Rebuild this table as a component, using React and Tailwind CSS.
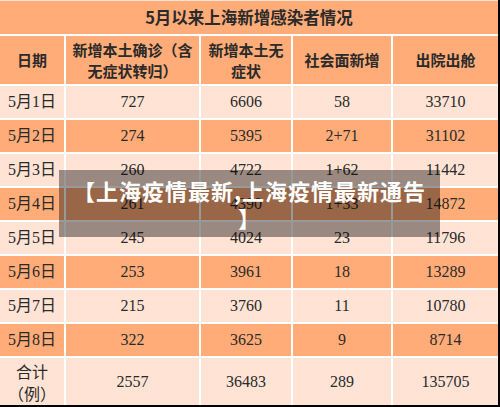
import React from 'react';

const rows = [
  ['5月1日', '727', '6606', '58', '33710'],
  ['5月2日', '274', '5395', '2+71', '31102'],
  ['5月3日', '260', '4722', '1+62', '11442'],
  ['5月4日', '261', '4390', '1+33', '14872'],
  ['5月5日', '245', '4024', '23', '11796'],
  ['5月6日', '253', '3961', '18', '13289'],
  ['5月7日', '215', '3760', '11', '10780'],
  ['5月8日', '322', '3625', '9', '8714'],
];

const sans = "font-['Noto_Sans_CJK_SC',sans-serif]";
const serif = "font-['Liberation_Serif','Noto_Sans_CJK_SC',serif]";

const App = () => {
  return (
    <div className="relative w-[500px] h-[407px] bg-black overflow-hidden">
      <div className="w-[498px] h-[1px] bg-[#ffe4d5]" />
      <div className="grid w-[498px] grid-cols-[64px_133px_90px_98px_105px] gap-[2px] bg-white text-[#2a2a2a]">
        {/* title */}
        <div className={`col-span-5 h-[33px] bg-[#ffac78] flex items-center justify-center text-[16.5px] font-bold ${sans}`}>
          5月以来上海新增感染者情况
        </div>

        {/* header */}
        <div className={`h-[48px] bg-[#ffac78] flex items-center justify-center text-[15px] font-bold ${sans}`}>日期</div>
        <div className={`h-[48px] bg-[#ffac78] flex items-center justify-center text-center text-[15px] leading-[21px] font-bold ${sans}`}>
          新增本土确诊（含<br />无症状转归）
        </div>
        <div className={`h-[48px] bg-[#ffac78] flex items-center justify-center text-center text-[15px] leading-[21px] font-bold ${sans}`}>
          新增本土无<br />症状
        </div>
        <div className={`h-[48px] bg-[#ffac78] flex items-center justify-center text-[15px] font-bold ${sans}`}>社会面新增</div>
        <div className={`h-[48px] bg-[#ffac78] flex items-center justify-center text-[15px] font-bold ${sans}`}>出院出舱</div>

        {/* data rows */}
        {rows.map((r, i) => {
          const bg = i % 2 === 0 ? 'bg-[#ffe4d5]' : 'bg-[#ffac78]';
          return r.map((c, j) => (
            <div key={i + '-' + j} className={`h-[32px] ${bg} flex items-center justify-center text-[16px] ${serif}`}>
              {c}
            </div>
          ));
        })}

        {/* total */}
        <div className={`h-[47px] bg-[#ffe4d5] flex items-center justify-center text-center text-[16px] leading-[22px] ${sans}`}>
          合计<br />（例）
        </div>
        {['2557', '36483', '289', '135705'].map((c) => (
          <div key={c} className={`h-[47px] bg-[#ffe4d5] flex items-center justify-center text-[16px] ${serif}`}>
            {c}
          </div>
        ))}
      </div>

      {/* caption overlay */}
      <div className="absolute left-[59px] top-[170px] w-[381px] h-[67px] bg-black/40 flex items-center justify-center px-[8px]">
        <p className={`text-white text-center font-bold text-[22px] leading-[27px] tracking-[1px] ${sans}`}>
          【上海疫情最新,上海疫情最新通告<br />】
        </p>
      </div>
    </div>
  );
};

export default App;
